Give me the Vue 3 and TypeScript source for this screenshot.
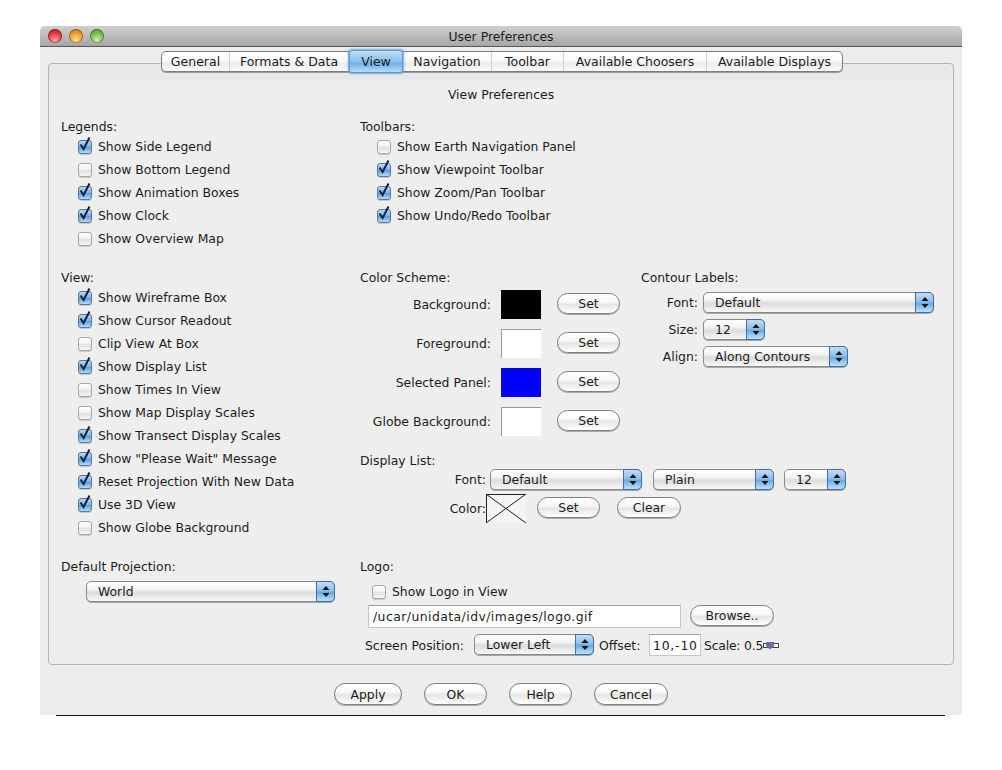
<script setup lang="ts">
interface Check { label: string; on: boolean }
const tabs: { label: string; width: number }[] = [
  { label: 'General', width: 68 },
  { label: 'Formats & Data', width: 119 },
  { label: 'View', width: 54 },
  { label: 'Navigation', width: 89 },
  { label: 'Toolbar', width: 72 },
  { label: 'Available Choosers', width: 143 },
  { label: 'Available Displays', width: 135 },
]
const legends: Check[] = [
  { label: 'Show Side Legend', on: true },
  { label: 'Show Bottom Legend', on: false },
  { label: 'Show Animation Boxes', on: true },
  { label: 'Show Clock', on: true },
  { label: 'Show Overview Map', on: false },
]
const toolbars: Check[] = [
  { label: 'Show Earth Navigation Panel', on: false },
  { label: 'Show Viewpoint Toolbar', on: true },
  { label: 'Show Zoom/Pan Toolbar', on: true },
  { label: 'Show Undo/Redo Toolbar', on: true },
]
const views: Check[] = [
  { label: 'Show Wireframe Box', on: true },
  { label: 'Show Cursor Readout', on: true },
  { label: 'Clip View At Box', on: false },
  { label: 'Show Display List', on: true },
  { label: 'Show Times In View', on: false },
  { label: 'Show Map Display Scales', on: false },
  { label: 'Show Transect Display Scales', on: true },
  { label: 'Show "Please Wait" Message', on: true },
  { label: 'Reset Projection With New Data', on: true },
  { label: 'Use 3D View', on: true },
  { label: 'Show Globe Background', on: false },
]
const colors = [
  { label: 'Background:', cls: 'sw-black' },
  { label: 'Foreground:', cls: 'sw-white' },
  { label: 'Selected Panel:', cls: 'sw-blue' },
  { label: 'Globe Background:', cls: 'sw-white' },
]
const footer: { label: string; cls: string }[] = [
  { label: 'Apply', cls: 'fb-apply' },
  { label: 'OK', cls: 'fb-std' },
  { label: 'Help', cls: 'fb-std' },
  { label: 'Cancel', cls: 'fb-cancel' },
]
</script>

<template>
  <div class="window">
    <header class="titlebar">
      <div class="lights">
        <span class="light red"></span>
        <span class="light amber"></span>
        <span class="light green"></span>
      </div>
      <span class="title">User Preferences</span>
    </header>

    <nav class="tabs">
      <span v-for="t in tabs" :key="t.label" class="tab" :class="{ active: t.label === 'View' }" :style="{ width: t.width + 'px' }">{{ t.label }}</span>
    </nav>

    <section class="panel">
      <div class="panel-title">View Preferences</div>
      <div class="grid">
        <div class="cell">
          <div class="head">Legends:</div>
          <label v-for="c in legends" :key="c.label" class="check">
            <span class="box" :class="{ on: c.on }">
              <svg v-if="c.on" width="16" height="18" viewBox="0 0 16 18"><path d="M3.5 8.5 L6.6 13 L12.5 1.5" fill="none" stroke="#10233f" stroke-width="2" /></svg>
            </span>
            {{ c.label }}
          </label>
        </div>
        <div class="cell span2">
          <div class="head">Toolbars:</div>
          <label v-for="c in toolbars" :key="c.label" class="check">
            <span class="box" :class="{ on: c.on }">
              <svg v-if="c.on" width="16" height="18" viewBox="0 0 16 18"><path d="M3.5 8.5 L6.6 13 L12.5 1.5" fill="none" stroke="#10233f" stroke-width="2" /></svg>
            </span>
            {{ c.label }}
          </label>
        </div>

        <div class="cell">
          <div class="head">View:</div>
          <label v-for="c in views" :key="c.label" class="check">
            <span class="box" :class="{ on: c.on }">
              <svg v-if="c.on" width="16" height="18" viewBox="0 0 16 18"><path d="M3.5 8.5 L6.6 13 L12.5 1.5" fill="none" stroke="#10233f" stroke-width="2" /></svg>
            </span>
            {{ c.label }}
          </label>
        </div>
        <div class="cell span2">
          <div class="upper">
            <div class="scheme">
              <div class="head">Color Scheme:</div>
              <div class="swatches">
                <div v-for="(c, i) in colors" :key="i" class="sw-row">
                  <span class="sw-label">{{ c.label }}</span>
                  <span class="swatch" :class="c.cls"></span>
                  <button class="btn b-set">Set</button>
                </div>
              </div>
            </div>
            <div class="contour">
              <div class="head">Contour Labels:</div>
              <div class="contour-rows">
                <div class="c-row">
                  <span class="c-label">Font:</span>
                  <div class="select s-cfont"><span class="s-text">Default</span><span class="s-arrows"><svg width="8" height="13" viewBox="0 0 8 13"><path d="M4 1 L7.5 5 H0.5 Z M4 12 L0.5 8 H7.5 Z" fill="#111" /></svg></span></div>
                </div>
                <div class="c-row">
                  <span class="c-label">Size:</span>
                  <div class="select s-size"><span class="s-text">12</span><span class="s-arrows"><svg width="8" height="13" viewBox="0 0 8 13"><path d="M4 1 L7.5 5 H0.5 Z M4 12 L0.5 8 H7.5 Z" fill="#111" /></svg></span></div>
                </div>
                <div class="c-row">
                  <span class="c-label">Align:</span>
                  <div class="select s-align"><span class="s-text">Along Contours</span><span class="s-arrows"><svg width="8" height="13" viewBox="0 0 8 13"><path d="M4 1 L7.5 5 H0.5 Z M4 12 L0.5 8 H7.5 Z" fill="#111" /></svg></span></div>
                </div>
              </div>
            </div>
          </div>
          <div class="display">
            <div class="head">Display List:</div>
            <div class="d-row">
              <span class="d-label">Font:</span>
              <div class="select s-dfont"><span class="s-text">Default</span><span class="s-arrows"><svg width="8" height="13" viewBox="0 0 8 13"><path d="M4 1 L7.5 5 H0.5 Z M4 12 L0.5 8 H7.5 Z" fill="#111" /></svg></span></div>
              <div class="select s-plain"><span class="s-text">Plain</span><span class="s-arrows"><svg width="8" height="13" viewBox="0 0 8 13"><path d="M4 1 L7.5 5 H0.5 Z M4 12 L0.5 8 H7.5 Z" fill="#111" /></svg></span></div>
              <div class="select s-size"><span class="s-text">12</span><span class="s-arrows"><svg width="8" height="13" viewBox="0 0 8 13"><path d="M4 1 L7.5 5 H0.5 Z M4 12 L0.5 8 H7.5 Z" fill="#111" /></svg></span></div>
            </div>
            <div class="d-color">
              <span class="d-label2">Color:</span>
              <svg class="xbox" width="40" height="29" viewBox="0 0 40 29">
                <rect x="0" y="0" width="40" height="29" fill="#f4f4f4" />
                <path d="M0 .5 H40 M.5 0 V29 M0 0 L40 29 M40 0 L0 29" stroke="#222" stroke-width="1" fill="none" />
              </svg>
              <button class="btn b-set">Set</button>
              <button class="btn b-clear">Clear</button>
            </div>
          </div>
        </div>

        <div class="cell">
          <div class="head">Default Projection:</div>
          <div class="select s-proj"><span class="s-text">World</span><span class="s-arrows"><svg width="8" height="13" viewBox="0 0 8 13"><path d="M4 1 L7.5 5 H0.5 Z M4 12 L0.5 8 H7.5 Z" fill="#111" /></svg></span></div>
        </div>
        <div class="cell span2">
          <div class="head">Logo:</div>
          <label class="check logo-check"><span class="box"></span>Show Logo in View</label>
          <div class="l-path">
            <div class="field f-path">/ucar/unidata/idv/images/logo.gif</div>
            <button class="btn b-browse">Browse..</button>
          </div>
          <div class="l-pos">
            <span class="l-poslabel">Screen Position:</span>
            <div class="select s-pos"><span class="s-text">Lower Left</span><span class="s-arrows"><svg width="8" height="13" viewBox="0 0 8 13"><path d="M4 1 L7.5 5 H0.5 Z M4 12 L0.5 8 H7.5 Z" fill="#111" /></svg></span></div>
            <span class="l-offset">Offset:</span>
            <div class="field f-offset">10,-10</div>
            <span class="l-scale">Scale: 0.5</span>
            <svg class="slider" width="17" height="9" viewBox="0 0 17 9">
              <rect x="1.5" y="2.5" width="15" height="4" fill="#f4f4f4" stroke="#444" />
              <path d="M4 1 H12 V5 L8 8.5 L4 5 Z" fill="#6a70a8" />
            </svg>
          </div>
        </div>
      </div>
    </section>

    <footer class="footer">
      <button v-for="b in footer" :key="b.label" class="btn fb" :class="b.cls">{{ b.label }}</button>
    </footer>
  </div>
  <div class="rule"></div>
</template>

<style>
html, body { background: #fff; }
</style>

<style scoped>
.window {
  margin: 26px 0 0 40px;
  width: 922px;
  height: 689px;
  background: #ededed;
  border-radius: 5px 5px 0 0;
  font-family: "DejaVu Sans", "Liberation Sans", sans-serif;
  font-size: 12.4px;
  color: #1c1c1c;
  overflow: hidden;
}
.rule { margin-left: 56px; width: 889px; height: 1px; background: #111; }

.titlebar {
  box-sizing: border-box;
  height: 21px;
  display: flex;
  align-items: center;
  justify-content: center;
  position: relative;
  background: linear-gradient(#cfcfcf, #a6a6a6);
  border-bottom: 1px solid #585858;
}
.lights { position: absolute; left: 8px; top: 3px; display: flex; gap: 7px; }
.light { width: 14px; height: 14px; border-radius: 50%; box-shadow: inset 0 0 0 1px rgba(0,0,0,.28); }
.red { background: radial-gradient(circle at 50% 80%, #ffa6a6, #e8343e 55%, #a8141e); }
.amber { background: radial-gradient(circle at 50% 80%, #ffe08e, #f09a2c 55%, #b9691a); }
.green { background: radial-gradient(circle at 50% 80%, #cdf2a6, #74bd4c 55%, #4a8c30); }

.tabs {
  position: relative;
  z-index: 1;
  display: flex;
  width: 682px;
  height: 21px;
  margin: 4px 0 0 121px;
  box-sizing: border-box;
  border: 1px solid #7d7d7d;
  border-radius: 5px;
  background: linear-gradient(#fff, #fafafa 45%, #ececec 60%, #fbfbfb);
  box-shadow: 0 1px 0 #999;
  font-size: 12.5px;
}
.tab {
  box-sizing: border-box;
  display: flex;
  align-items: center;
  justify-content: center;
  flex: none;
  border-right: 1px solid #d0d0d0;
  line-height: 19px;
  white-space: nowrap;
}
.tab:last-child { border-right: 0; }
.tab.active {
  position: relative;
  margin: -2px 0;
  background: linear-gradient(#c0ddf5, #8cc0ec 50%, #6fb0e6 60%, #b8dcf7);
  border: 1px solid #5f9ad0;
  border-radius: 3px;
  box-shadow: 0 0 2px 1px #6aa6dc;
}

.panel {
  margin: -9px 0 0 8px;
  width: 906px;
  box-sizing: border-box;
  border: 1px solid #b4b4b4;
  border-radius: 4px;
  padding: 0 12px 8px;
  background: linear-gradient(#e8e8e8, #e8e8e8 15px, #eeeeee 17px);
}
.panel-title { padding-top: 21px; height: 18px; line-height: 20px; text-align: center; margin-bottom: 14px; }
.grid {
  display: grid;
  grid-template-columns: 299px 281px 1fr;
  grid-template-rows: 133px 271px auto;
  row-gap: 18px;
}
.span2 { grid-column: span 2; }
.head { height: 18px; line-height: 20px; }
.check { display: flex; align-items: center; height: 23px; padding-left: 17px; }
.box {
  position: relative;
  flex: none;
  box-sizing: border-box;
  width: 14px;
  height: 14px;
  margin-right: 6px;
  border: 1px solid #a6a6a6;
  border-radius: 3px;
  background: linear-gradient(#fff, #f2f2f2 45%, #e0e0e0 55%, #f6f6f6);
  box-shadow: 0 1px 0 #c8c8c8;
}
.box.on {
  border-color: #5b7896;
  background: linear-gradient(#b9d8f4, #80b6e8 45%, #5d9fe0 55%, #b3dcf8);
}
.box svg { position: absolute; left: -2px; top: -5px; }

.upper { display: flex; height: 183px; }
.scheme { width: 281px; }
.swatches { margin-top: 4px; display: grid; row-gap: 10px; }
.sw-row { display: flex; align-items: center; height: 29px; }
.sw-label { width: 131px; text-align: right; margin-right: 10px; }
.swatch { box-sizing: border-box; width: 40px; height: 29px; margin-right: 16px; }
.sw-black { background: #000; }
.sw-white { background: #fff; border-top: 1px solid #9a9a9a; border-left: 1px solid #9a9a9a; }
.sw-blue { background: #0000ff; border-top: 1px solid #1010a0; border-left: 1px solid #1010a0; }

.btn {
  box-sizing: border-box;
  height: 21px;
  padding: 0;
  border: 1px solid #808080;
  border-radius: 11px;
  background: linear-gradient(#fff, #f8f8f8 40%, #e6e6e6 55%, #fff);
  box-shadow: 0 1px 0 #aaa;
  font: inherit;
  color: inherit;
  line-height: 17px;
}
.b-set { width: 63px; margin-bottom: 2px; }
.b-clear { width: 64px; margin-left: 17px; margin-bottom: 2px; }
.b-browse { width: 84px; margin-left: 9px; margin-bottom: 2px; }

.contour-rows { margin-top: 6px; display: grid; row-gap: 6px; }
.c-row { display: flex; align-items: center; }
.c-label { width: 57px; text-align: right; margin-right: 5px; }

.select {
  box-sizing: border-box;
  position: relative;
  height: 21px;
  display: flex;
  align-items: center;
  flex: none;
  border: 1px solid #8a8a8a;
  border-radius: 5px;
  background: linear-gradient(#fff, #f6f6f6 35%, #dcdcdc 55%, #f8f8f8);
  box-shadow: 0 1px 0 #a8a8a8;
}
.s-text { padding-left: 11px; line-height: 17px; }
.s-arrows {
  position: absolute;
  right: -1px;
  top: -1px;
  bottom: -1px;
  width: 19px;
  box-sizing: border-box;
  display: flex;
  align-items: center;
  justify-content: center;
  border: 1px solid #3f6ea8;
  border-radius: 0 5px 5px 0;
  background: linear-gradient(#c5dcf3, #8fbeea 45%, #69abe6 55%, #bde0f8);
}
.s-cfont { width: 231px; }
.s-size { width: 62px; }
.s-align { width: 145px; }
.s-dfont { width: 152px; margin-right: 11px; }
.s-plain { width: 121px; margin-right: 10px; }
.s-proj { width: 249px; margin: 6px 0 0 25px; }
.s-pos { width: 120px; margin-right: 5px; align-self: flex-start; }

.d-row { display: flex; align-items: center; }
.d-label { width: 126px; text-align: right; margin-right: 4px; }
.d-color { display: flex; align-items: center; height: 29px; margin-top: 4px; }
.d-label2 { width: 126px; text-align: right; }
.xbox { flex: none; margin-right: 11px; }

.logo-check { padding-left: 12px; height: 23px; margin-top: 5px; }
.l-path { display: flex; align-items: center; margin: 2px 0 0 8px; height: 23px; }
.field {
  box-sizing: border-box;
  background: #fff;
  border: 1px solid #c6c6c6;
  border-top-color: #a0a0a0;
  display: flex;
  align-items: center;
  flex: none;
}
.f-path { width: 313px; height: 23px; padding-left: 4px; letter-spacing: .45px; }
.l-pos { display: flex; align-items: center; height: 22px; margin: 6px 0 0 5px; }
.l-poslabel { width: 109px; }
.l-offset { width: 50px; }
.f-offset { width: 52px; height: 22px; padding-left: 3px; margin-right: 3px; letter-spacing: .8px; }
.l-scale { flex: none; letter-spacing: -.2px; }
.slider { flex: none; margin-left: -1px; }

.footer { display: flex; justify-content: center; gap: 22px; margin-top: 18px; }
.fb { height: 22px; }
.fb-apply { width: 68px; }
.fb-std { width: 63px; }
.fb-cancel { width: 74px; }
</style>
